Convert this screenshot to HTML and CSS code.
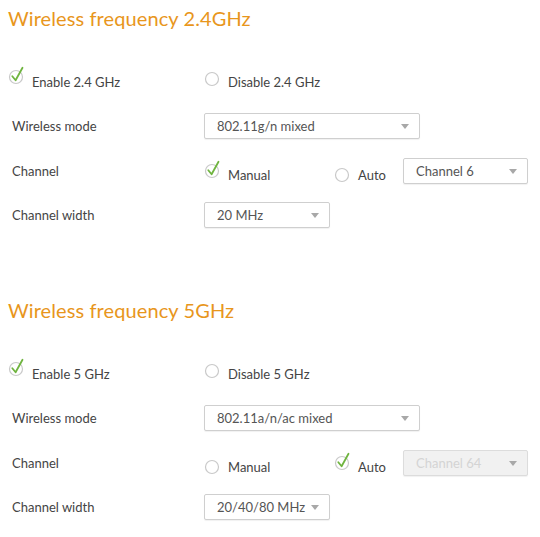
FILE: index.html
```html
<!DOCTYPE html>
<html>
<head>
<meta charset="utf-8">
<link rel="stylesheet" href="styles.css">
</head>
<body>
<section class="freq">
  <h2 class="title">Wireless frequency 2.4GHz</h2>
  <div class="row row-enable">
    <label class="opt opt-first"><svg class="ico ico-check" width="18" height="20" viewBox="0 0 18 20"><circle cx="8" cy="12" r="6.5" fill="#fff" stroke="#c9c9c9" stroke-width="1.2"/><path d="M4.3 11.2 L7.6 15.2 L14.5 2.8" fill="none" stroke="#6fb43f" stroke-width="1.8" stroke-linecap="round" stroke-linejoin="round"/></svg><span>Enable 2.4 GHz</span></label>
    <label class="opt"><svg class="ico ico-radio" width="18" height="20" viewBox="0 0 18 20"><circle cx="8" cy="12" r="6.5" fill="#fff" stroke="#c9c9c9" stroke-width="1.2"/></svg><span>Disable 2.4 GHz</span></label>
  </div>
  <div class="row row-mode">
    <span class="lbl">Wireless mode</span>
    <div class="sel sel-wide"><span>802.11g/n mixed</span><i class="arr"></i></div>
  </div>
  <div class="row row-chan">
    <span class="lbl">Channel</span>
    <div class="chan">
      <label class="opt opt-man"><svg class="ico ico-check" width="18" height="20" viewBox="0 0 18 20"><circle cx="8" cy="12" r="6.5" fill="#fff" stroke="#c9c9c9" stroke-width="1.2"/><path d="M4.3 11.2 L7.6 15.2 L14.5 2.8" fill="none" stroke="#6fb43f" stroke-width="1.8" stroke-linecap="round" stroke-linejoin="round"/></svg><span>Manual</span></label>
      <label class="opt opt-auto"><svg class="ico ico-radio" width="18" height="20" viewBox="0 0 18 20"><circle cx="8" cy="12" r="6.5" fill="#fff" stroke="#c9c9c9" stroke-width="1.2"/></svg><span>Auto</span></label>
      <div class="sel sel-chan"><span>Channel 6</span><i class="arr"></i></div>
    </div>
  </div>
  <div class="row row-width">
    <span class="lbl">Channel width</span>
    <div class="sel sel-narrow"><span>20 MHz</span><i class="arr"></i></div>
  </div>
</section>

<section class="freq freq-second">
  <h2 class="title">Wireless frequency 5GHz</h2>
  <div class="row row-enable">
    <label class="opt opt-first"><svg class="ico ico-check" width="18" height="20" viewBox="0 0 18 20"><circle cx="8" cy="12" r="6.5" fill="#fff" stroke="#c9c9c9" stroke-width="1.2"/><path d="M4.3 11.2 L7.6 15.2 L14.5 2.8" fill="none" stroke="#6fb43f" stroke-width="1.8" stroke-linecap="round" stroke-linejoin="round"/></svg><span>Enable 5 GHz</span></label>
    <label class="opt"><svg class="ico ico-radio" width="18" height="20" viewBox="0 0 18 20"><circle cx="8" cy="12" r="6.5" fill="#fff" stroke="#c9c9c9" stroke-width="1.2"/></svg><span>Disable 5 GHz</span></label>
  </div>
  <div class="row row-mode">
    <span class="lbl">Wireless mode</span>
    <div class="sel sel-wide"><span>802.11a/n/ac mixed</span><i class="arr"></i></div>
  </div>
  <div class="row row-chan">
    <span class="lbl">Channel</span>
    <div class="chan">
      <label class="opt opt-man"><svg class="ico ico-radio" width="18" height="20" viewBox="0 0 18 20"><circle cx="8" cy="12" r="6.5" fill="#fff" stroke="#c9c9c9" stroke-width="1.2"/></svg><span>Manual</span></label>
      <label class="opt opt-auto"><svg class="ico ico-check" width="18" height="20" viewBox="0 0 18 20"><circle cx="8" cy="12" r="6.5" fill="#fff" stroke="#c9c9c9" stroke-width="1.2"/><path d="M4.3 11.2 L7.6 15.2 L14.5 2.8" fill="none" stroke="#6fb43f" stroke-width="1.8" stroke-linecap="round" stroke-linejoin="round"/></svg><span>Auto</span></label>
      <div class="sel sel-chan sel-disabled"><span>Channel 64</span><i class="arr"></i></div>
    </div>
  </div>
  <div class="row row-width">
    <span class="lbl">Channel width</span>
    <div class="sel sel-narrow"><span>20/40/80 MHz</span><i class="arr"></i></div>
  </div>
</section>
</body>
</html>
```

FILE: styles.css
```css
html, body {
  margin: 0;
  padding: 0;
  background: #fff;
}
body {
  font-family: Lato, "Open Sans", sans-serif;
  font-size: 13px;
  color: #444;
  width: 540px;
}
.freq {
  padding-left: 8px;
}
.freq-second {
  margin-top: 56px;
}
.title {
  margin: 0;
  height: 36px;
  line-height: 36px;
  font-size: 20px;
  font-weight: 400;
  color: #e8961c;
  letter-spacing: 0.1px;
}
.row {
  display: grid;
  grid-template-columns: 196px 1fr;
  align-items: center;
}
.row-enable {
  margin-top: 24px;
  height: 44px;
}
.row-mode {
  height: 44px;
}
.row-chan {
  height: 46px;
}
.row-width {
  height: 42px;
}
.lbl {
  padding-left: 4px;
}
.opt {
  display: flex;
  align-items: center;
}
.opt span {
  line-height: 16px;
}
.ico {
  flex: none;
  display: block;
  margin-right: 6px;
}
.row-enable .ico-check {
  margin-bottom: 14px;
}
.row-enable .ico-radio {
  margin-bottom: 10px;
}
.chan {
  display: flex;
  align-items: center;
}
.opt-man {
  width: 130px;
}
.chan .opt span {
  padding-top: 8px;
}
.chan .ico-check {
  margin-bottom: 4px;
}
.chan .ico-radio {
  margin-top: 4px;
}
.opt-auto {
  width: 69px;
}
.sel {
  box-sizing: border-box;
  height: 26px;
  border: 1px solid #cfcfcf;
  border-radius: 2px;
  box-shadow: 0 1px 1px rgba(0, 0, 0, 0.06);
  display: flex;
  align-items: center;
  justify-content: space-between;
  padding: 0 10px 0 12px;
  color: #555;
  background: #fff;
}
.sel-wide {
  width: 216px;
}
.sel-chan {
  width: 125px;
  height: 26px;
}
.sel-narrow {
  width: 126px;
}
.sel-disabled {
  background: #f1f1f1;
  color: #d4d4d4;
  border-color: #dcdcdc;
}
.arr {
  width: 0;
  height: 0;
  border-left: 4.5px solid transparent;
  border-right: 4.5px solid transparent;
  border-top: 5px solid #a8a8a8;
}
```
